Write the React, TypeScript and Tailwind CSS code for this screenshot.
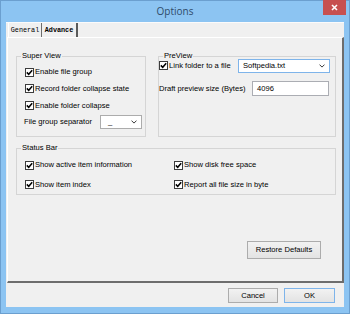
import React from 'react'

const Check = ({ label, className = '' }: { label: string; className?: string }) => (
  <div className={`flex items-center ${className}`}>
    <span className="flex h-[9px] w-[9px] shrink-0 items-center justify-center border border-[#3c3c3c] bg-white">
      <svg width="7" height="7" viewBox="0 0 7 7">
        <path d="M0.8 3.4 L2.7 5.3 L6.2 1.2" fill="none" stroke="#000" strokeWidth="1.5" />
      </svg>
    </span>
    <span className="ml-[1px] whitespace-nowrap">{label}</span>
  </div>
)

const Chevron = () => (
  <svg width="6" height="4" viewBox="0 0 6 4" className="shrink-0">
    <path d="M0.5 0.6 L3 3.1 L5.5 0.6" fill="none" stroke="#3a3a3a" strokeWidth="1" />
  </svg>
)

const Group = ({ title, className = '', children }: { title: string; className?: string; children: React.ReactNode }) => (
  <fieldset className={`border border-[#d5d5d5] ${className}`}>
    <legend className="ml-[4px] px-[1px] leading-[10px]">{title}</legend>
    {children}
  </fieldset>
)

export default function App() {
  return (
    <div className="flex h-[314px] w-[350px] flex-col border border-[#6b9fcf] bg-[#8cc4f2] font-['Liberation_Sans',Arial,sans-serif] text-[7.6px] text-black">
      <div className="relative flex h-[21px] shrink-0 items-center justify-center">
        <span className="font-['Open_Sans',sans-serif] text-[10px] text-[#2f4b69]">Options</span>
        <div className="absolute right-[3px] -top-[1px] flex h-[15px] w-[23px] items-center justify-center bg-[#c75050]">
          <svg width="7" height="7" viewBox="0 0 7 7">
            <path d="M1 1 L6 6 M6 1 L1 6" stroke="#fff" strokeWidth="1.6" />
          </svg>
        </div>
      </div>

      <div className="mx-[5px] mb-[6px] flex flex-1 flex-col border-t border-t-[#fbfbfb] bg-[#f0f0f0]">
        <div className="flex h-[14px] shrink-0 pl-[2px] font-['Liberation_Mono',monospace] text-[6.8px]">
          <div className="flex w-[34px] items-center justify-center border-l border-r border-l-white border-r-[#6d6d6d]">General</div>
          <div className="flex w-[36px] items-center justify-center border-r-2 border-r-[#5a5a5a] font-bold">Advance</div>
        </div>

        <div className="ml-[1px] flex h-[246px] shrink-0 flex-col border-b-2 border-l border-r-2 border-t border-b-[#6d6d6d] border-l-white border-r-[#6d6d6d] border-t-white pl-[8px] pr-[6px]">
          <div className="mt-[13px] flex gap-[12px]">
            <Group title="Super View" className="w-[130px]">
              <div className="flex flex-col pb-[6px] pl-[8px] pt-[3px]">
                <Check label="Enable file group" className="h-[16px]" />
                <Check label="Record folder collapse state" className="h-[17px]" />
                <Check label="Enable folder collapse" className="h-[17px]" />
                <div className="-ml-[1px] flex h-[16px] items-center">
                  <span className="w-[76px] whitespace-nowrap">File group separator</span>
                  <div className="flex h-[14px] w-[42px] items-center justify-between border border-[#acacac] bg-white pl-[7px] pr-[4px]">
                    <span>_</span>
                    <Chevron />
                  </div>
                </div>
              </div>
            </Group>

            <Group title="PreView" className="flex-1">
              <div className="flex flex-col">
                <div className="-mt-[2px] flex h-[14px] items-center">
                  <Check label="Link folder to a file" />
                  <div className="ml-auto mr-[5px] flex h-[14px] w-[92px] items-center justify-between border border-[#7eb4ea] bg-white pl-[4px] pr-[4px]">
                    <span>Softpedia.txt</span>
                    <Chevron />
                  </div>
                </div>
                <div className="mt-[8px] flex h-[15px] items-center">
                  <span className="whitespace-nowrap">Draft preview size (Bytes)</span>
                  <div className="ml-auto mr-[6px] flex h-[15px] w-[77px] items-center border border-[#abadb3] bg-white pl-[4px]">
                    4096
                  </div>
                </div>
              </div>
            </Group>
          </div>

          <Group title="Status Bar" className="mt-[6px]">
            <div className="grid grid-cols-[149px_1fr] pb-[1px] pl-[8px] pt-[4px]">
              <Check label="Show active item information" className="h-[16px]" />
              <Check label="Show disk free space" className="h-[16px]" />
              <Check label="Show item index" className="mt-[3px] h-[17px]" />
              <Check label="Report all file size in byte" className="mt-[3px] h-[17px]" />
            </div>
          </Group>

          <button className="mr-[15px] mt-[46px] flex h-[18px] w-[74px] items-center justify-center self-end border border-[#acacac] bg-gradient-to-b from-[#f2f2f2] to-[#e3e3e3]">
            Restore Defaults
          </button>
        </div>

        <div className="mt-[5px] flex justify-end gap-[6px] pr-[9px]">
          <button className="flex h-[15px] w-[50px] items-center justify-center border border-[#acacac] bg-gradient-to-b from-[#f2f2f2] to-[#e3e3e3]">
            Cancel
          </button>
          <button className="flex h-[15px] w-[51px] items-center justify-center border border-[#7eb4ea] bg-gradient-to-b from-[#f2f2f2] to-[#e3e3e3]">
            OK
          </button>
        </div>
      </div>
    </div>
  )
}
